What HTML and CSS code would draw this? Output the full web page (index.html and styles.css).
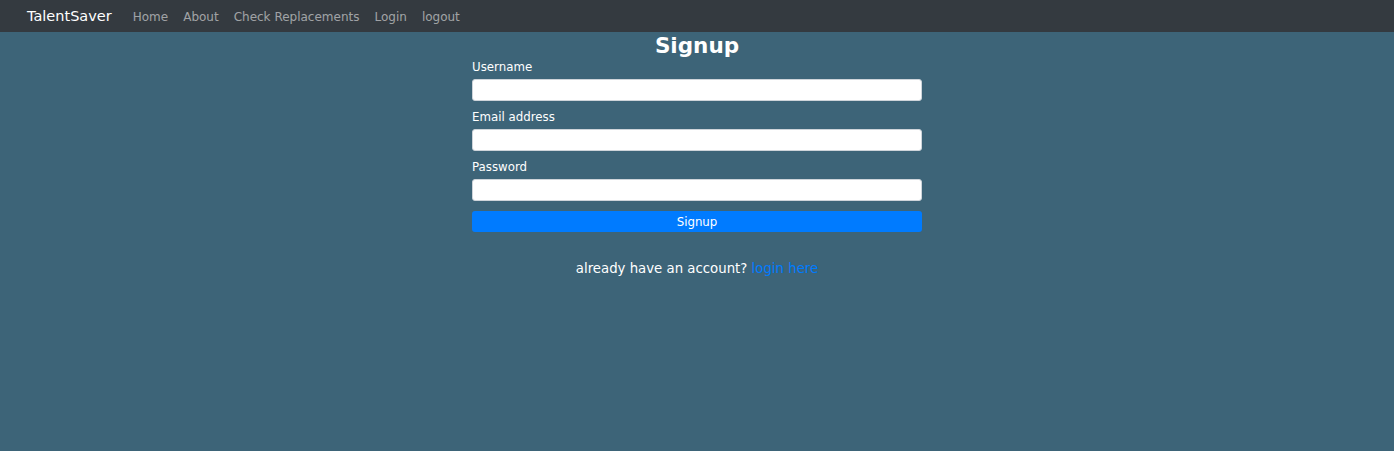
FILE: index.html
```html
<!DOCTYPE html>
<html>
<head>
<meta charset="utf-8">
<link rel="stylesheet" href="styles.css">
</head>
<body>
<nav class="navbar">
  <a class="brand" href="#">TalentSaver</a>
  <ul class="nav">
    <li><a href="#">Home</a></li>
    <li><a href="#">About</a></li>
    <li><a href="#">Check Replacements</a></li>
    <li><a href="#">Login</a></li>
    <li><a href="#">logout</a></li>
  </ul>
</nav>
<main class="container">
  <h1 class="title">Signup</h1>
  <form class="form">
    <div class="group">
      <label>Username</label>
      <input type="text">
    </div>
    <div class="group">
      <label>Email address</label>
      <input type="email">
    </div>
    <div class="group">
      <label>Password</label>
      <input type="password">
    </div>
    <button type="button" class="btn">Signup</button>
  </form>
  <p class="alt">already have an account? <a href="#">login here</a></p>
</main>
</body>
</html>
```
FILE: styles.css
```css
* { box-sizing: border-box; }
html, body { margin: 0; padding: 0; }
body {
  background: #3d6478;
  font-family: "DejaVu Sans", "Open Sans", sans-serif;
  color: #fff;
  min-height: 451px;
}
.navbar {
  background: #343a40;
  height: 32px;
  display: flex;
  align-items: center;
  padding: 0 0 1px 27px;
}
.brand {
  color: #fff;
  text-decoration: none;
  font-size: 14.5px;
  margin-right: 21px;
}
.nav {
  list-style: none;
  margin: 0;
  padding: 0;
  display: flex;
  gap: 15px;
}
.nav a {
  color: rgba(255,255,255,.55);
  text-decoration: none;
  font-size: 12px;
}
.container {
  width: 450px;
  margin: 0 auto;
}
.title {
  text-align: center;
  font-size: 21.5px;
  font-weight: bold;
  margin: 0 0 3px;
  padding-top: 1px;
  line-height: 25px;
}
.group {
  margin-bottom: 10px;
}
.group label {
  display: block;
  font-size: 11.8px;
  line-height: 13px;
  margin-bottom: 5px;
}
.group input {
  display: block;
  width: 100%;
  height: 22px;
  border: 1px solid #ced4da;
  border-radius: 3px;
  background: #fff;
  padding: 0 8px;
}
.btn {
  display: block;
  width: 100%;
  height: 21px;
  background: #007bff;
  border: 0;
  border-radius: 3px;
  color: #fff;
  font-family: inherit;
  font-size: 11.8px;
  padding: 0;
  margin-top: 0;
}
.alt {
  text-align: center;
  font-size: 13.3px;
  margin: 29px 0 0;
}
.alt a {
  color: #007bff;
  text-decoration: none;
}
```
